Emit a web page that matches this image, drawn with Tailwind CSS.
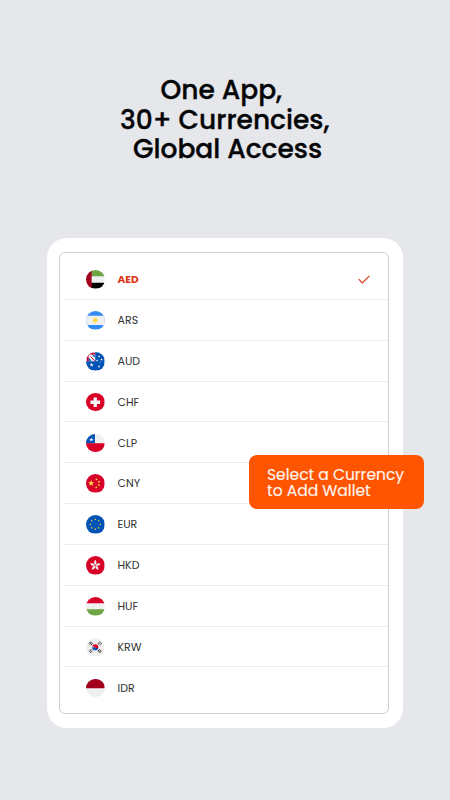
<!DOCTYPE html>
<html lang="en">
<head>
<meta charset="utf-8">
<title>Currencies</title>
<script src="https://cdn.jsdelivr.net/npm/@tailwindcss/browser@4"></script>
</head>
<body class="bg-[#e6e7eb] font-['Poppins','Inter',sans-serif]">
<svg class="hidden">
  <defs>
    <path id="star" d="M0-1 .24-.31.95-.31.38.12.59.81 0 .4-.59.81-.38.12-.95-.31-.24-.31Z"/>
  </defs>
</svg>
<main class="relative flex h-[800px] w-[450px] flex-col overflow-hidden bg-[#e6e7eb]">
  <h1 class="flex h-[238px] flex-col pt-[75px] text-[26.5px] leading-[29.7px] font-medium whitespace-nowrap text-[#050608] [-webkit-text-stroke:0.35px_#050608]">
    <span class="pl-[160.5px]">One App,</span>
    <span class="pl-[120px]">30+ Currencies,</span>
    <span class="pl-[133px]">Global Access</span>
  </h1>
  <section class="ml-[47px] h-[490px] w-[356px] rounded-[20px] bg-white p-3 pt-3.5">
    <ul class="flex h-[462px] w-[330px] flex-col rounded-[6px] border border-[#cfcfcf] pt-[6px] pl-1 text-[11px] text-[#333]">
      <li class="flex h-[40.85px] shrink-0 items-center border-b border-[#ededed] pt-[1.5px] pl-[22px]">
        <svg class="size-[18.5px] rounded-full" viewBox="0 0 18 18"><path fill="#f0f0f0" d="M0 0h18v18H0z"/><path fill="#6da544" d="M5 0h13v6H5z"/><path fill="#000" d="M5 12.500h13V18H5z"/><path fill="#a2001d" d="M0 0h5.500v18H0z"/></svg>
        <span class="ml-[13px] grow text-[10.5px] font-bold text-[#e03214]">AED</span>
        <svg class="mr-[18px] h-[9px] w-3" viewBox="0 0 12 9" fill="none" stroke="#d8391c" stroke-width="1.200"><path d="M.7 4.200 4.300 7.900 11.400.8"/></svg>
      </li>
      <li class="flex h-[40.85px] shrink-0 items-center border-b border-[#ededed] pt-[1.5px] pl-[22px]">
        <svg class="size-[18.5px] rounded-full" viewBox="0 0 18 18"><path fill="#338af3" d="M0 0h18v18H0z"/><path fill="#f0f0f0" d="M0 4.500h18v9H0z"/><circle cx="9" cy="9" r="2" fill="#ffda44"/><path stroke="#ffda44" stroke-width=".7" d="M6 9h6M9 6v6M7 7l4 4M11 7l-4 4"/></svg>
        <span class="ml-[13px] tracking-[0.1px]">ARS</span>
      </li>
      <li class="flex h-[40.85px] shrink-0 items-center border-b border-[#ededed] pt-[1.5px] pl-[22px]">
        <svg class="size-[18.5px] rounded-full" viewBox="0 0 18 18"><path fill="#0052b4" d="M0 0h18v18H0z"/><path fill="#f0f0f0" d="M0 0h9v9H0z"/><path fill="#0052b4" d="M5.500 2.500 8.500 5.500V3.200zM2.500 5.500 5.500 8.500H2z"/><path fill="none" stroke="#d80027" stroke-width="1.700" d="M9 1.700H1.700V9"/><path fill="none" stroke="#d80027" stroke-width=".9" d="m4.500 4.500 4.200 4.200"/><g fill="#f0f0f0"><use href="#star" transform="translate(5.500 12.500) scale(2.200)"/><use href="#star" transform="translate(12.700 4.300) scale(1.400)"/><use href="#star" transform="translate(10.800 8.200) scale(1.300)"/><use href="#star" transform="translate(15.200 7.300) scale(1.400)"/><use href="#star" transform="translate(13.800 9.900) scale(.8)"/><use href="#star" transform="translate(12.700 14) scale(1.500)"/></g></svg>
        <span class="ml-[13px]">AUD</span>
      </li>
      <li class="flex h-[40.85px] shrink-0 items-center border-b border-[#ededed] pt-[1.5px] pl-[22px]">
        <svg class="size-[18.5px] rounded-full" viewBox="0 0 18 18"><path fill="#d80027" d="M0 0h18v18H0z"/><path fill="#f7f7f7" d="M7.400 4.300h3.200v3.100h3.100v3.200h-3.100v3.100H7.400v-3.100H4.300V7.400h3.100z"/></svg>
        <span class="ml-[13px]">CHF</span>
      </li>
      <li class="flex h-[40.85px] shrink-0 items-center border-b border-[#ededed] pt-[1px] pl-[22px]">
        <svg class="size-[18.5px] rounded-full" viewBox="0 0 18 18"><path fill="#f0f0f0" d="M0 0h18v18H0z"/><path fill="#0052b4" d="M0 0h8.700v9.200H0z"/><path fill="#d80027" d="M0 9h18v9H0z"/><use href="#star" fill="#f0f0f0" transform="translate(5.200 5.500) scale(2.300)"/></svg>
        <span class="ml-[13px]">CLP</span>
      </li>
      <li class="flex h-[40.85px] shrink-0 items-center border-b border-[#ededed] pt-[1px] pl-[22px]">
        <svg class="size-[18.5px] rounded-full" viewBox="0 0 18 18"><path fill="#d80027" d="M0 0h18v18H0z"/><g fill="#ffda44"><use href="#star" transform="translate(5 9) scale(3.300)"/><use href="#star" transform="translate(10.200 5.200) rotate(20) scale(1.400)"/><use href="#star" transform="translate(12.600 7.600) scale(1.400)"/><use href="#star" transform="translate(12.500 10.800) rotate(20) scale(1.400)"/><use href="#star" transform="translate(10 13) scale(1.400)"/></g></svg>
        <span class="ml-[13px]">CNY</span>
      </li>
      <li class="flex h-[40.85px] shrink-0 items-center border-b border-[#ededed] pt-[1.5px] pl-[22px]">
        <svg class="size-[18.5px] rounded-full" viewBox="0 0 18 18"><path fill="#0052b4" d="M0 0h18v18H0z"/><g fill="#ffda44"><use href="#star" transform="translate(9 4.200) scale(1.150)"/><use href="#star" transform="translate(12.400 5.600) scale(1.150)"/><use href="#star" transform="translate(13.800 9) scale(1.150)"/><use href="#star" transform="translate(12.400 12.400) scale(1.150)"/><use href="#star" transform="translate(9 13.800) scale(1.150)"/><use href="#star" transform="translate(5.600 12.400) scale(1.150)"/><use href="#star" transform="translate(4.200 9) scale(1.150)"/><use href="#star" transform="translate(5.600 5.600) scale(1.150)"/></g></svg>
        <span class="ml-[13px]">EUR</span>
      </li>
      <li class="flex h-[40.85px] shrink-0 items-center border-b border-[#ededed] pt-[1.5px] pl-[22px]">
        <svg class="size-[18.5px] rounded-full" viewBox="0 0 18 18"><path fill="#d80027" d="M0 0h18v18H0z"/><g fill="#f0f0f0" transform="translate(9 9.200)"><path id="petal" d="M0-.4C-1.700-1.600-1.600-4.700.8-5.200 .4-3.700 2.200-2.500 0-.4Z"/><use href="#petal" transform="rotate(72)"/><use href="#petal" transform="rotate(144)"/><use href="#petal" transform="rotate(216)"/><use href="#petal" transform="rotate(288)"/></g></svg>
        <span class="ml-[13px]">HKD</span>
      </li>
      <li class="flex h-[40.85px] shrink-0 items-center border-b border-[#ededed] pt-[1.5px] pl-[22px]">
        <svg class="size-[18.5px] rounded-full" viewBox="0 0 18 18"><path fill="#f0f0f0" d="M0 0h18v18H0z"/><path fill="#d80027" d="M0 0h18v6H0z"/><path fill="#6da544" d="M0 12h18v6H0z"/></svg>
        <span class="ml-[13px]">HUF</span>
      </li>
      <li class="flex h-[40.85px] shrink-0 items-center border-b border-[#ededed] pt-[1.5px] pl-[22px]">
        <svg class="size-[18.5px] rounded-full" viewBox="0 0 18 18"><path fill="#f0f0f0" d="M0 0h18v18H0z"/><path fill="#0052b4" d="M6 9a3 3 0 0 0 6 0z"/><path fill="#d80027" d="M6 9a3 3 0 0 1 6 0c0 1.700-2 1.700-3 .3S6 8 6 9z"/><g stroke="#111" stroke-width=".8"><path d="m2.800 5.600 2-2.200M3.700 6.400l2-2.200M4.600 7.200l1.900-2.200"/><path d="m15.200 12.400-2 2.200M14.300 11.600l-2 2.200M13.400 10.800l-1.900 2.200"/><path stroke-dasharray="1.200 .5" d="m15.200 5.600-2-2.200M14.300 6.400l-2-2.200M13.400 7.200l-1.900-2.200M2.800 12.400l2 2.200M3.700 11.600l2 2.200M4.600 10.800l1.900 2.200"/></g></svg>
        <span class="ml-[13px]">KRW</span>
      </li>
      <li class="flex h-[40.85px] shrink-0 items-center pt-[0.5px] pl-[22px]">
        <svg class="size-[18.5px] rounded-full" viewBox="0 0 18 18"><path fill="#f0f0f0" d="M0 0h18v18H0z"/><path fill="#a2001d" d="M0 0h18v9H0z"/></svg>
        <span class="ml-[13px]">IDR</span>
      </li>
    </ul>
  </section>
  <div class="absolute top-[455px] left-[249px] h-[54px] w-[175px] rounded-[8px] bg-[#ff5500] pt-[11.5px] pl-[18px] text-[15.5px] leading-[16.5px] whitespace-nowrap text-[#fff4ee] [-webkit-text-stroke:0.15px_#fff4ee]">
    <p>Select a Currency</p>
    <p>to Add Wallet</p>
  </div>
</main>
</body>
</html>
